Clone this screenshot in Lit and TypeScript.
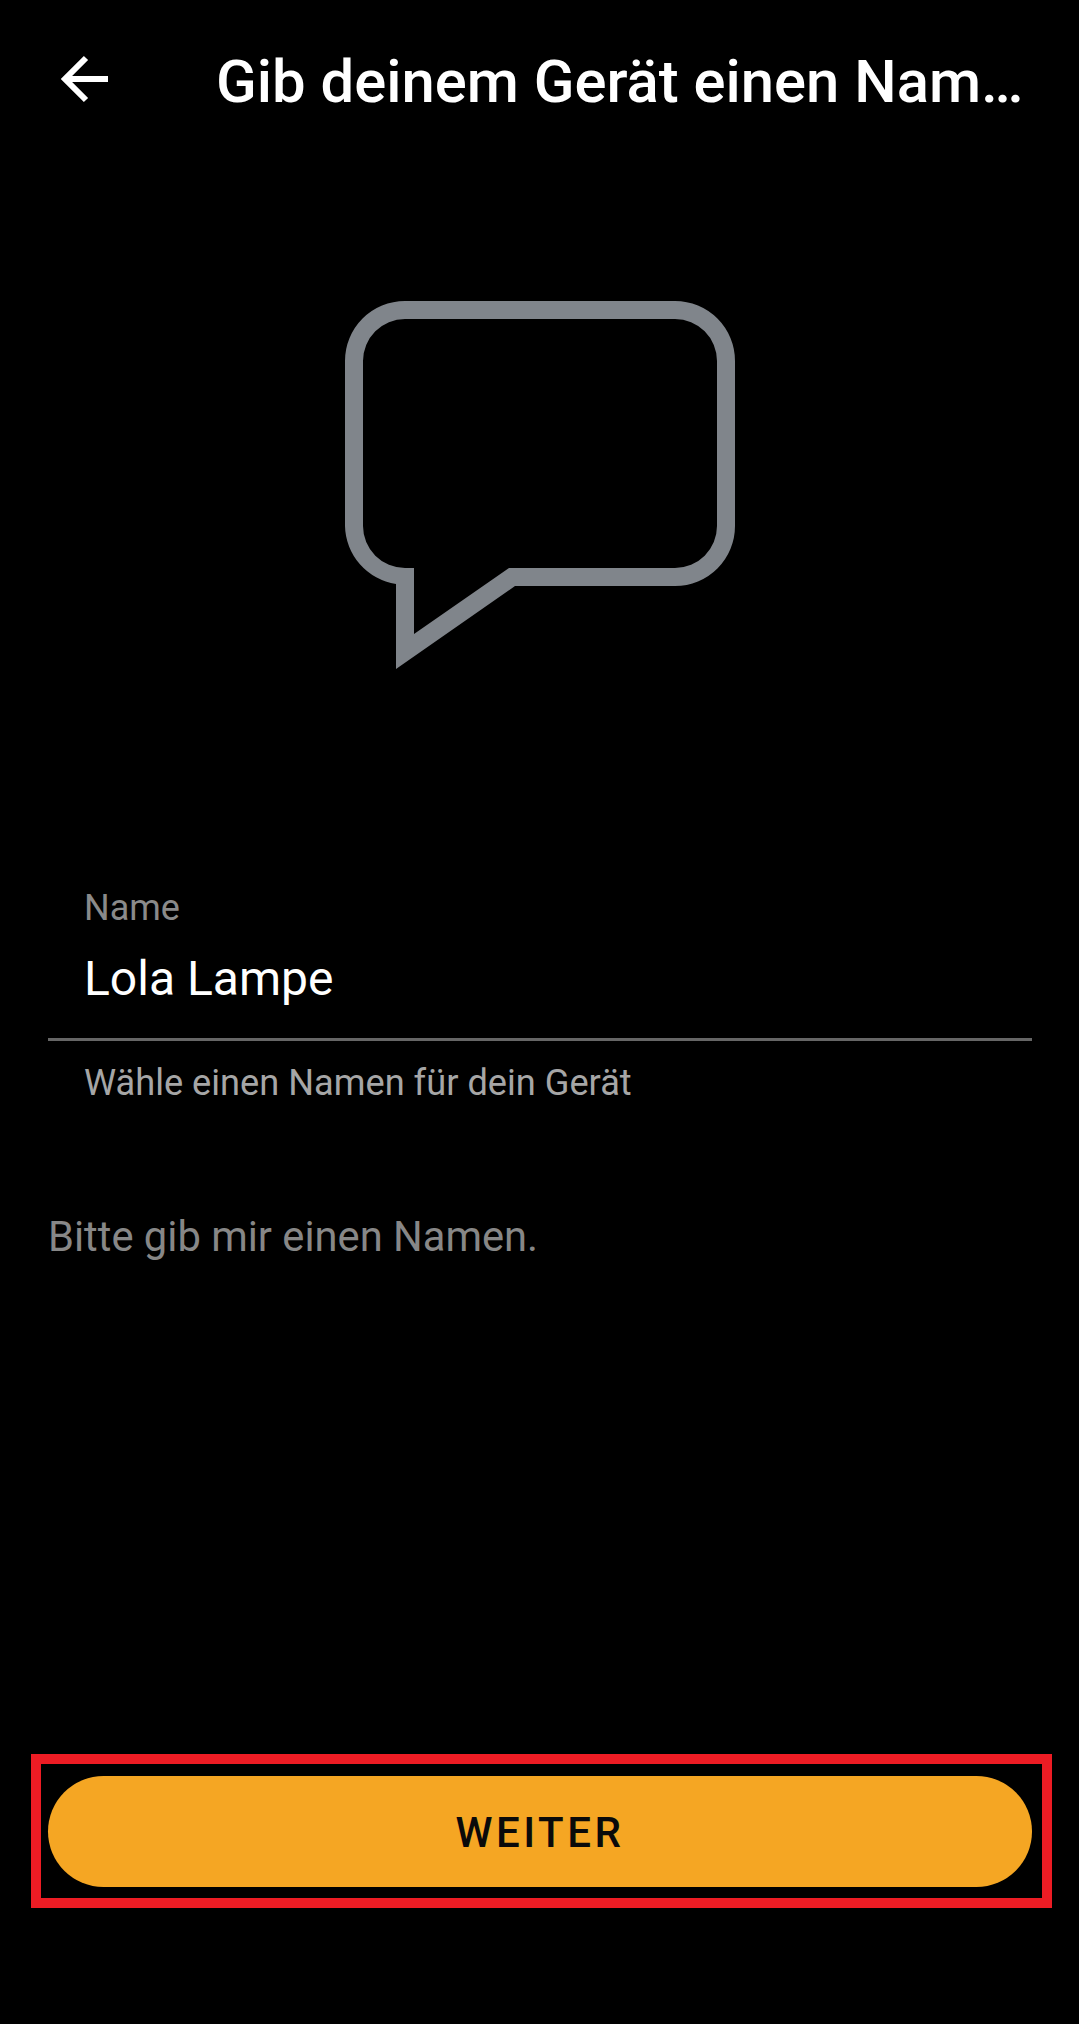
import { html, css, LitElement } from "lit";
import { customElement, property } from "lit/decorators.js";

@customElement("app-root")
export class AppRoot extends LitElement {
  static styles = css`
    :host {
      display: block;
      background: #000;
      font-family: Roboto, "Noto Sans", sans-serif;
    }

    .page {
      display: flex;
      flex-direction: column;
      height: 2024px;
      box-sizing: border-box;
      overflow: hidden;
    }

    .header {
      display: flex;
      align-items: center;
      height: 164px;
      padding: 0 47px 0 60px;
      flex: none;
    }
    .back {
      flex: none;
      width: 49px;
      height: 50px;
      margin-right: 107px;
      margin-top: -4px;
    }
    .title {
      flex: 1;
      min-width: 0;
      font-size: 59.8px;
      font-weight: 500;
      color: #fff;
      white-space: nowrap;
    }

    .bubble {
      flex: none;
      display: block;
      width: 390px;
      height: 368px;
      margin: 137px auto 0;
    }

    .field {
      margin: 220px 47px 0 48px;
      flex: none;
    }
    .label {
      padding-left: 36px;
      font-size: 36px;
      line-height: 38px;
      color: #8a8a8a;
    }
    .value {
      padding: 25px 0 32px 36px;
      font-size: 48px;
      line-height: 54px;
      color: #fff;
      border-bottom: 3px solid #666;
    }
    .helper {
      padding: 22px 0 0 36px;
      font-size: 36.2px;
      line-height: 40px;
      color: #a6a6a6;
    }

    .note {
      flex: none;
      margin: 111px 48px 0;
      font-size: 41.7px;
      line-height: 46px;
      color: #878787;
    }

    .spacer {
      flex: 1;
    }

    .highlight {
      flex: none;
      box-sizing: border-box;
      margin: 0 27px 116px 31px;
      padding: 12px 10px 11px 7px;
      border: 10px solid #ed1c24;
    }
    .next {
      display: block;
      width: 100%;
      height: 111px;
      border: none;
      border-radius: 56px;
      background-color: #f5a623;
      color: #0a0a0a;
      font-family: inherit;
      font-size: 42px;
      font-weight: 500;
      letter-spacing: 3.5px;
      padding: 2px 0 0;
    }
  `;

  @property() name: string = "Lola Lampe";

  render() {
    return html`
      <div class="page">
        <div class="header">
          <svg class="back" viewBox="0 0 49 50" fill="none" stroke="#fff" stroke-width="6">
            <path d="M48 24H6" />
            <path d="M26 3 5 24l21 21" />
          </svg>
          <div class="title">Gib deinem Gerät einen Nam…</div>
        </div>

        <svg class="bubble" viewBox="0 0 390 368">
          <path
            fill="#80858b"
            fill-rule="evenodd"
            d="M60 0H330A60 60 0 0 1 390 60V225A60 60 0 0 1 330 285H170L51 368V283A60 60 0 0 1 0 225V60A60 60 0 0 1 60 0Z
               M60 18A42 42 0 0 0 18 60V225A42 42 0 0 0 60 267H69V333L164 267H330A42 42 0 0 0 372 225V60A42 42 0 0 0 330 18Z"
          />
        </svg>

        <div class="field">
          <div class="label">Name</div>
          <div class="value">${this.name}</div>
          <div class="helper">Wähle einen Namen für dein Gerät</div>
        </div>

        <div class="note">Bitte gib mir einen Namen.</div>

        <div class="spacer"></div>

        <div class="highlight">
          <button class="next">WEITER</button>
        </div>
      </div>
    `;
  }
}
